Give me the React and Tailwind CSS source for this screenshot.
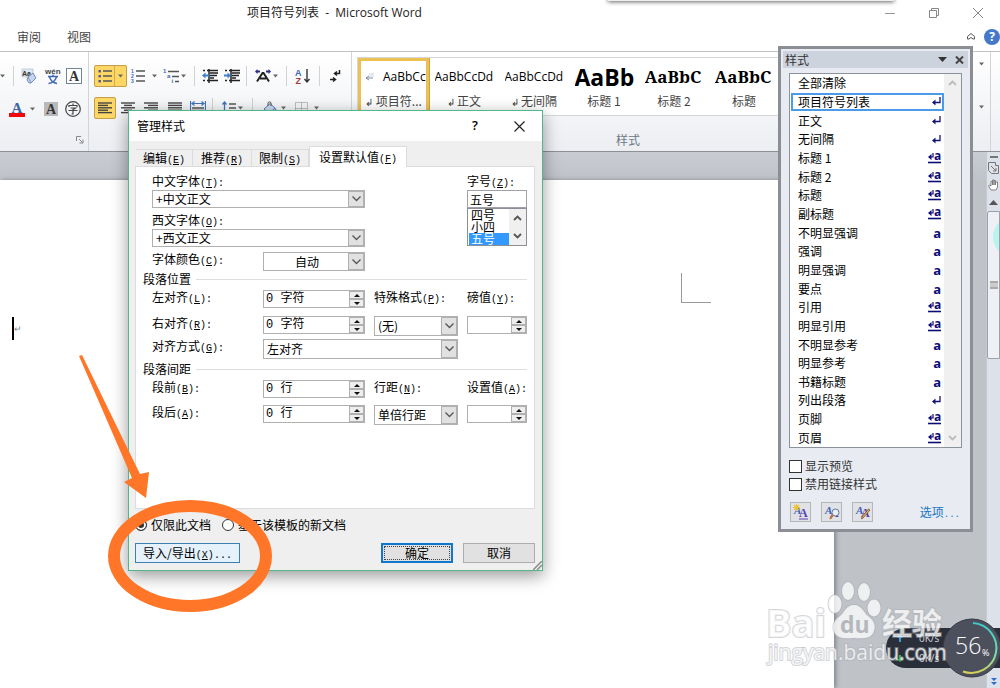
import React, { useState } from 'react';
import clsx from 'clsx';

const styleItems = [
  { name: '全部清除', type: 'none' },
  { name: '项目符号列表', type: 'para' },
  { name: '正文', type: 'para' },
  { name: '无间隔', type: 'para' },
  { name: '标题 1', type: 'linked' },
  { name: '标题 2', type: 'linked' },
  { name: '标题', type: 'linked' },
  { name: '副标题', type: 'linked' },
  { name: '不明显强调', type: 'char' },
  { name: '强调', type: 'char' },
  { name: '明显强调', type: 'char' },
  { name: '要点', type: 'char' },
  { name: '引用', type: 'linked' },
  { name: '明显引用', type: 'linked' },
  { name: '不明显参考', type: 'char' },
  { name: '明显参考', type: 'char' },
  { name: '书籍标题', type: 'char' },
  { name: '列出段落', type: 'para' },
  { name: '页脚', type: 'linked' },
  { name: '页眉', type: 'linked' },
];

const galleryItems = [
  { label: '正文', preview: 'AaBbCcDd', mark: true, look: "font-['Open_Sans'] text-xs" },
  { label: '无间隔', preview: 'AaBbCcDd', mark: true, look: "font-['Open_Sans'] text-xs" },
  { label: '标题 1', preview: 'AaBb', look: "font-['Open_Sans'] text-[23px] font-bold" },
  { label: '标题 2', preview: 'AaBbC', look: "font-['Noto_Serif','DejaVu_Serif',serif] text-[17px] font-bold" },
  { label: '标题', preview: 'AaBbC', look: "font-['Noto_Serif','DejaVu_Serif',serif] text-[17px] font-bold" },
];

/* ---------- ribbon icons ---------- */

const Lines = ({ rows, x = 0, color = '#444' }) => (
  <g stroke={color} strokeWidth="1.4">
    {rows.map(([start, end], i) => (
      <path key={i} d={`M${x + start} ${2 + i * 2.4}H${x + end}`} />
    ))}
  </g>
);

const Arrow = ({ className }) => (
  <svg className={clsx('h-1 w-[5px] shrink-0', className)} viewBox="0 0 5 4">
    <path d="M0 0.5h5L2.5 3.5z" fill="#666" />
  </svg>
);

const Sep = ({ className }) => <span className={clsx('h-5 w-px shrink-0 bg-[#cfd2d6]', className)} />;

const RibbonButton = ({ label, className, active, children }) => (
  <button
    type="button"
    aria-label={label}
    className={clsx(
      'flex h-[22px] shrink-0 items-center justify-center',
      active && 'rounded-xs border border-[#c79d45] bg-[#fdd766]',
      className
    )}
  >
    {children}
  </button>
);

const ClearFormatIcon = () => (
  <svg className="h-4 w-4" viewBox="0 0 16 16">
    <rect x="1" y="1" width="11" height="8" fill="#dfe7f2" stroke="#a9b7cc" strokeWidth="0.6" />
    <text x="1" y="8" fontSize="7" fontWeight="bold" fontFamily="Liberation Sans" fill="#333">Aa</text>
    <path d="M7 9l5-4 3 5-5 5H8l-2-3z" fill="#c6d5ee" stroke="#6d86b3" strokeWidth="0.9" />
    <path d="M7 9l3 6" stroke="#6d86b3" strokeWidth="0.8" />
  </svg>
);

const PinyinIcon = () => (
  <svg className="h-[18px] w-[18px] overflow-visible" viewBox="0 0 18 18">
    <text x="1" y="7" fontSize="8" fontWeight="bold" fontFamily="Liberation Sans" fill="#444">wén</text>
    <path d="M4 9.5h10M9 7.5v2M5.5 10c1 3 4 6 7.500 6.500M12.500 10c-1 3-4 6-8 6.500" stroke="#3e67b5" strokeWidth="1.4" fill="none" />
  </svg>
);

const BoxedAIcon = () => (
  <svg className="h-4 w-4" viewBox="0 0 16 16">
    <rect x="0.5" y="0.5" width="15" height="15" fill="#fff" stroke="#6f8796" />
    <text x="8" y="13" textAnchor="middle" fontSize="14" fontWeight="bold" fontFamily="Liberation Serif" fill="#333">A</text>
  </svg>
);

const FontColorIcon = () => (
  <svg className="h-[18px] w-4" viewBox="0 0 16 18">
    <text x="8" y="12.500" textAnchor="middle" fontSize="15" fontWeight="bold" fontFamily="Liberation Serif" fill="#3c63a8">A</text>
    <rect x="0" y="13" width="16" height="4" fill="#f00808" />
  </svg>
);

const ShadedAIcon = () => (
  <svg className="h-[14px] w-[14px]" viewBox="0 0 14 14">
    <rect width="14" height="14" fill="#b9b9b9" />
    <text x="7" y="12" textAnchor="middle" fontSize="14" fontWeight="bold" fontFamily="Liberation Serif" fill="#333">A</text>
  </svg>
);

const CircledIcon = () => (
  <svg className="h-4 w-4" viewBox="0 0 16 16">
    <circle cx="8" cy="8" r="7.300" fill="none" stroke="#444" strokeWidth="1.200" />
    <path d="M8 2.500v1.500M4 6V4.500h8V6M5.500 7h5L8 8.500V13H6.500M3.500 9.500h9" fill="none" stroke="#444" strokeWidth="1.200" />
  </svg>
);

const BulletsIcon = ({ numbers }) => (
  <svg className="h-[14px] w-[14px] overflow-visible" viewBox="0 0 14 14">
    {[2, 7, 12].map((y, i) => (
      <g key={y}>
        {numbers ? (
          <text x="0" y={y + 2} fontSize="5" fontWeight="bold" fontFamily="Liberation Sans" fill="#3e67b5">{i + 1}</text>
        ) : (
          <rect x="0.500" y={y - 1} width="2.400" height="2.400" fill="#4a5b86" />
        )}
        <path d={`M5 ${y}h9`} stroke="#555" strokeWidth="1.500" />
      </g>
    ))}
  </svg>
);

const MultilevelIcon = () => (
  <svg className="h-4 w-4 overflow-visible" viewBox="0 0 16 16">
    <g fontSize="6" fontWeight="bold" fontFamily="Liberation Sans" fill="#3e67b5">
      <text x="0" y="5">1</text>
      <text x="4" y="10">a</text>
      <text x="8.500" y="15">i</text>
    </g>
    <path d="M5 3.500h11M9 8.500h7M12 13.500h4" stroke="#555" strokeWidth="1.400" />
  </svg>
);

const IndentIcon = ({ out }) => (
  <svg className="h-[14px] w-4" viewBox="0 0 16 14">
    <path d="M1 1.500h2M5 1.500h11M8 4h8M8 6.500h7M8 9h4M5 11.500h11M1 11.500h2M7 0v14" stroke="#222" strokeWidth="1.500" />
    <path d={out ? 'M0 6.500l3.500-3v2H7v2H3.500v2z' : 'M7 6.500l-3.500-3v2H0v2h3.500v2z'} fill="#3f7fcb" />
  </svg>
);

const AsianLayoutIcon = () => (
  <svg className="h-[14px] w-4" viewBox="0 0 16 14">
    <path d="M2 12.500L7.500 4h1L14 12.500M5 9.500h6" fill="none" stroke="#222" strokeWidth="2" />
    <path d="M0 2.500L2.500 0v1.500H5v2H2.500V5zM16 2.500L13.500 0v1.500H11v2h2.500V5z" fill="#2c2d86" />
  </svg>
);

const SortIcon = () => (
  <svg className="h-4 w-4 overflow-visible" viewBox="0 0 16 16">
    <text x="0" y="7.500" fontSize="9" fontWeight="bold" fontFamily="Liberation Sans" fill="#3e67b5">A</text>
    <text x="0.500" y="15.500" fontSize="9" fontWeight="bold" fontFamily="Liberation Sans" fill="#a53a3a">Z</text>
    <path d="M12 1v13M9.500 11l2.500 3 2.500-3" fill="none" stroke="#333" strokeWidth="1.400" />
  </svg>
);

const MarksIcon = () => (
  <svg className="h-[14px] w-[11px]" viewBox="0 0 11 14">
    <path d="M9.500 1v3.500H5M7 2.500L4.500 4.500 7 6.500M0 10.500h5M3 8.500l2.500 2L3 12.500" fill="none" stroke="#222" strokeWidth="1.500" />
  </svg>
);

const AlignIcon = ({ rows }) => (
  <svg className="h-[14px] w-[14px]" viewBox="0 0 14 14">
    <Lines rows={rows} />
  </svg>
);

const DistributeIcon = () => (
  <svg className="h-4 w-4" viewBox="0 0 16 16">
    <path d="M0.500 1v14M15.500 1v14M2 3.500h12M4.500 1.500L2 3.500l2.500 2M11.500 1.500l2.500 2-2.500 2" fill="none" stroke="#3f73bd" strokeWidth="1.200" />
    <path d="M2 8h12M2 10.500h12M2 13h12" stroke="#555" strokeWidth="1.400" />
  </svg>
);

const SpacingIcon = () => (
  <svg className="h-[14px] w-[14px]" viewBox="0 0 14 14">
    <path d="M2.500 1v12M0.500 3.500l2-2.500 2 2.500M0.500 10.500l2 2.500 2-2.500" fill="none" stroke="#3f73bd" strokeWidth="1.300" />
    <path d="M7 3h7M7 7h7M7 11h7" stroke="#555" strokeWidth="1.500" />
  </svg>
);

const BucketIcon = () => (
  <svg className="h-[14px] w-[14px]" viewBox="0 0 14 14">
    <path d="M1 8l6-5.500L12 7l-6 5.500z" fill="#c9d8ef" stroke="#5b7fb8" />
    <path d="M5 5V2c0-1.500 3-1.500 3 0v3" fill="none" stroke="#555" />
    <path d="M12 7c2 1 2 4 1 5-1.500-1-1.500-3-1-5z" fill="#3f73bd" />
  </svg>
);

const BordersIcon = () => (
  <svg className="h-[13px] w-[13px]" viewBox="0 0 13 13">
    <path d="M0.500 0.500h12v12h-12zM6.500 0.500v12M0.500 6.500h12" fill="none" stroke="#888" strokeDasharray="1 1" />
    <path d="M0 12.500h13" stroke="#555" />
  </svg>
);

/* ---------- dialog parts ---------- */

// caption followed by its access key, e.g. 编辑(E)
const Caption = ({ text, k, end = '' }) => (
  <>
    {text}
    <span className="font-['Liberation_Mono',monospace] text-[10px] leading-none">
      (<u>{k}</u>){end}
    </span>
  </>
);

const FieldLabel = ({ id, text, k, className }) => (
  <label htmlFor={id} className={clsx('block whitespace-nowrap', className || 'h-[14px] leading-[14px]')}>
    <Caption text={text} k={k} end=":" />
  </label>
);

const SelectBox = ({ id, value, className, center }) => (
  <span className={clsx('relative block border border-[#b0b0b0] bg-white', className)}>
    <select
      id={id}
      className={clsx('block h-full w-full appearance-none bg-transparent pr-[17px] pl-[3px] leading-4 outline-none', center && 'text-center')}
    >
      <option>{value}</option>
    </select>
    <span className="pointer-events-none absolute inset-y-0 right-0 flex w-4 items-center justify-center border border-[#b0b0b0] bg-[#e1e1e1]">
      <svg className="h-[6px] w-[9px]" viewBox="0 0 9 6">
        <path d="M0.500 0.500l4 4 4-4" fill="none" stroke="#555" strokeWidth="1.300" />
      </svg>
    </span>
  </span>
);

const SpinBox = ({ id, value }) => (
  <span className="flex h-[18px] border border-[#b0b0b0] bg-white">
    <input
      id={id}
      defaultValue={value}
      className="w-full min-w-0 flex-1 pl-[2px] font-['Liberation_Mono','Noto_Sans_CJK_SC',monospace] leading-4 outline-none"
    />
    <span className="flex w-[15px] shrink-0 flex-col">
      {['M0 3h6L3 0z', 'M0 0h6L3 3z'].map((d, i) => (
        <button
          key={d}
          type="button"
          aria-label={i === 0 ? '增加' : '减少'}
          className="flex flex-1 items-center justify-center border border-[#b0b0b0] bg-[#eee]"
        >
          <svg className="h-[3px] w-[6px]" viewBox="0 0 6 3">
            <path d={d} fill="#111" />
          </svg>
        </button>
      ))}
    </span>
  </span>
);

const SectionTitle = ({ children }) => (
  <div className="-ml-[9px] flex h-4 items-center gap-[5px] leading-4">
    <h3>{children}</h3>
    <span className="h-px flex-1 bg-[#dedede]" />
  </div>
);

const Chevron = ({ up, color }) => (
  <svg className="h-[6px] w-[9px]" viewBox="0 0 9 6">
    <path d={up ? 'M1 5l3.500-3.500L8 5' : 'M1 1l3.500 3.500L8 1'} fill="none" stroke={color} strokeWidth="1.800" />
  </svg>
);

const rowGrid = 'grid grid-cols-[102px_102px_84px_60px] items-start gap-x-[9px]';

const ManageStylesDialog = () => {
  const [scope, setScope] = useState('doc');
  const tabs = [
    { text: '编辑', k: 'E', width: 'w-[57px]' },
    { text: '推荐', k: 'R', width: 'w-[59px]' },
    { text: '限制', k: 'S', width: 'w-[57px]' },
  ];

  return (
    <section
      role="dialog"
      aria-label="管理样式"
      className="absolute top-[110px] left-32 flex w-[415px] flex-col border border-[#52b788] bg-[#efefef] text-xs text-black shadow-[0_5px_16px_rgba(0,0,0,0.4)]"
    >
      <header className="flex h-[30px] items-center bg-white pl-2">
        <h2 className="flex-1">管理样式</h2>
        <button type="button" aria-label="帮助" className="mr-9 font-['Open_Sans'] text-[13px] font-semibold">?</button>
        <button type="button" aria-label="关闭" className="mr-[17px]">
          <svg className="h-[11px] w-[11px]" viewBox="0 0 11 11">
            <path d="M0.500 0.500l10 10M10.500 0.500l-10 10" stroke="#222" strokeWidth="1.200" />
          </svg>
        </button>
      </header>

      <div className="flex flex-col pt-[5px] pr-[7px] pb-[7px] pl-[6px]">
        <div role="tablist" className="relative z-10 -mb-px flex h-[21px] items-end pl-px">
          {tabs.map(tab => (
            <button
              key={tab.k}
              type="button"
              role="tab"
              className={clsx('mb-px h-[17px] border-t border-r border-[#dcdcdc] leading-4', tab.width)}
            >
              <Caption text={tab.text} k={tab.k} />
            </button>
          ))}
          <button type="button" role="tab" aria-selected="true" className="h-[21px] w-[98px] border border-b-0 border-[#dcdcdc] bg-white leading-5">
            <Caption text="设置默认值" k="F" />
          </button>
        </div>

        <div role="tabpanel" className="h-[343px] border border-[#dcdcdc] bg-white pt-[6px] pr-[7px] pl-4">
          <div className="flex justify-between">
            <div className="w-[213px]">
              <FieldLabel id="cn-font" text="中文字体" k="T" className="h-[17px] leading-4" />
              <SelectBox id="cn-font" value="+中文正文" className="h-[18px]" />
              <FieldLabel id="en-font" text="西文字体" k="O" className="mt-1 h-[17px] leading-4" />
              <SelectBox id="en-font" value="+西文正文" className="h-[18px]" />
              <div className="mt-[5px] flex items-start justify-between">
                <FieldLabel id="font-color" text="字体颜色" k="C" />
                <SelectBox id="font-color" value="自动" className="h-[19px] w-[102px]" center />
              </div>
            </div>
            <div className="w-[60px]">
              <FieldLabel id="font-size" text="字号" k="Z" className="h-[17px] leading-4" />
              <input id="font-size" defaultValue="五号" className="block h-[18px] w-full border border-[#a0a0a8] bg-white pl-[2px] leading-4 outline-none" />
              <div className="flex h-[38px] border border-[#8c8f98] bg-white">
                <ul role="listbox" aria-label="字号" className="flex-1 pl-px leading-3">
                  <li role="option" className="pl-[2px]">四号</li>
                  <li role="option" className="pl-[2px]">小四</li>
                  <li role="option" aria-selected="true" className="bg-[#3399ff] pl-[2px] text-white">五号</li>
                </ul>
                <div className="flex w-[17px] flex-col items-center justify-between bg-[#f0f0f0] py-[6px]">
                  <Chevron up color="#555" />
                  <Chevron color="#555" />
                </div>
              </div>
            </div>
          </div>

          <SectionTitle>段落位置</SectionTitle>
          <div className={clsx('mt-[3px]', rowGrid)}>
            <FieldLabel id="left" text="左对齐" k="L" />
            <SpinBox id="left" value="0 字符" />
            <FieldLabel id="special" text="特殊格式" k="P" />
            <FieldLabel id="points" text="磅值" k="Y" />
          </div>
          <div className={clsx('mt-2', rowGrid)}>
            <FieldLabel id="right" text="右对齐" k="R" />
            <SpinBox id="right" value="0 字符" />
            <SelectBox id="special" value="(无)" className="h-5" />
            <SpinBox id="points" value="" />
          </div>
          <div className={clsx('mt-[3px]', rowGrid)}>
            <FieldLabel id="align" text="对齐方式" k="G" />
            <SelectBox id="align" value="左对齐" className="col-span-2 h-5" />
          </div>

          <div className="mt-[2px]">
            <SectionTitle>段落间距</SectionTitle>
          </div>
          <div className={clsx('mt-[3px]', rowGrid)}>
            <FieldLabel id="before" text="段前" k="B" />
            <SpinBox id="before" value="0 行" />
            <FieldLabel id="line" text="行距" k="N" />
            <FieldLabel id="at" text="设置值" k="A" />
          </div>
          <div className={clsx('mt-[7px]', rowGrid)}>
            <FieldLabel id="after" text="段后" k="A" />
            <SpinBox id="after" value="0 行" />
            <SelectBox id="line" value="单倍行距" className="h-5" />
            <SpinBox id="at" value="" />
          </div>
        </div>

        <div className="mt-2 flex h-4 items-center gap-[11px] leading-4">
          {[['doc', '仅限此文档'], ['template', '基于该模板的新文档']].map(([value, text]) => (
            <label key={value} className="flex items-center gap-1">
              <input
                type="radio"
                name="scope"
                checked={scope === value}
                onChange={() => setScope(value)}
                className="h-3 w-3 appearance-none rounded-full border border-[#333] bg-white checked:bg-[#333] checked:shadow-[inset_0_0_0_2px_#fff]"
              />
              {text}
            </label>
          ))}
        </div>

        <div className="mt-[10px] flex h-5 leading-[18px]">
          <button type="button" className="w-[105px] border border-[#3c7fb1] bg-[#e5f1fb]">
            <Caption text="导入/导出" k="X" end="..." />
          </button>
          <button type="button" className="ml-auto w-[72px] border-2 border-[#1177cc] bg-[#e1e1e1] p-px">
            <span className="block h-full border border-dotted border-[#444] leading-3">确定</span>
          </button>
          <button type="button" className="ml-[10px] w-[72px] border border-[#adadad] bg-[#e1e1e1]">取消</button>
        </div>
      </div>
      <svg className="absolute right-0 bottom-0 h-[9px] w-[9px]" viewBox="0 0 9 9">
        <path d="M0 9L9 0M4 9l5-5" stroke="#8b8b8b" strokeWidth="1.500" />
      </svg>
    </section>
  );
};

/* ---------- styles pane ---------- */

const TypeMark = ({ type }) => {
  if (type === 'none') return null;
  if (type === 'para') {
    return (
      <svg className="h-[9px] w-[9px]" viewBox="0 0 9 9">
        <path d="M8 0v5.500H1.500" fill="none" stroke="#14147a" strokeWidth="1.300" />
        <path d="M0 5.500L3.500 2.500v6z" fill="#14147a" />
      </svg>
    );
  }
  if (type === 'char') {
    return <span className="font-['Open_Sans'] text-[13px] font-bold text-[#0c0c78]">a</span>;
  }
  return (
    <svg className="h-3 w-[13px] overflow-visible" viewBox="0 0 13 12">
      <path d="M5 1v4H2" fill="none" stroke="#0c0c78" strokeWidth="1.200" />
      <path d="M0 5L3.500 2v6z" fill="#0c0c78" />
      <text x="6" y="8" fontSize="12" fontWeight="bold" fontFamily="Open Sans" fill="#0c0c78">a</text>
      <path d="M0 10.500h13" stroke="#0c0c78" strokeWidth="1.600" />
    </svg>
  );
};

const PaneIcon = ({ kind }) => (
  <svg className="h-4 w-4" viewBox="0 0 16 16">
    <text x="1" y="10" fontSize="11" fontStyle="italic" fontWeight="bold" fontFamily="Liberation Serif" fill="#3e63b8">A</text>
    <text x="6" y="13" fontSize="12" fontWeight="bold" fontFamily="Liberation Serif" fill="#5a3fb0">A</text>
    {kind === 'new' && (
      <>
        <path d="M3.500 0v7M0 3.500h7M1 1l5 5M6 1L1 6" stroke="#eebf2c" strokeWidth="1.100" />
        <path d="M6 15h9" stroke="#5a3fb0" />
      </>
    )}
    {kind === 'inspect' && (
      <>
        <circle cx="11.500" cy="8.500" r="3.500" fill="#e6effa" stroke="#697a90" />
        <path d="M9 11l-3 4" stroke="#b77338" strokeWidth="2" />
      </>
    )}
    {kind === 'manage' && <path d="M15 6l-7 8-1.500.8.500-2L13.500 5z" fill="#e7b565" stroke="#704a28" strokeWidth="0.800" />}
  </svg>
);

const StylesPane = () => {
  const [selected, setSelected] = useState('项目符号列表');
  return (
    <aside className="absolute top-[46px] right-[27px] flex w-[195px] flex-col border-[3px] border-[#8b8f94] bg-[#e8ecf2] px-[2px] pt-[2px] pb-[7px] text-xs text-black">
      <header className="flex h-[17px] items-center bg-[#cdd3dd] pr-1 pl-[2px] text-[#333]">
        <h2 className="flex-1 leading-4">样式</h2>
        <button type="button" aria-label="任务窗格选项">
          <svg className="h-[5px] w-[9px]" viewBox="0 0 9 5"><path d="M0 0h9L4.500 5z" fill="#333" /></svg>
        </button>
        <button type="button" aria-label="关闭" className="ml-2">
          <svg className="h-2 w-[9px]" viewBox="0 0 9 8"><path d="M1 0.500l7 7M8 0.500l-7 7" stroke="#444" strokeWidth="2" /></svg>
        </button>
      </header>

      <div className="mx-[6px] mt-[5px] flex h-[375px] border border-[#8c929c] bg-white">
        <ul className="flex flex-1 flex-col pl-px">
          {styleItems.map(item => (
            <li key={item.name} className="flex min-h-0 flex-1">
              <button
                type="button"
                onClick={() => setSelected(item.name)}
                className={clsx(
                  'flex w-full items-center justify-between border-2 pr-px pl-[5px] leading-3',
                  selected === item.name ? 'border-[#4a9be8]' : 'border-transparent'
                )}
              >
                <span>{item.name}</span>
                <TypeMark type={item.type} />
              </button>
            </li>
          ))}
        </ul>
        <div className="flex w-[17px] flex-col items-center justify-between bg-[#f0f0f0] py-[6px]">
          <Chevron up color="#bbb" />
          <Chevron color="#bbb" />
        </div>
      </div>

      <div className="mt-[10px] ml-[6px] flex flex-col gap-[2px] leading-4 text-[#333]">
        {['显示预览', '禁用链接样式'].map(text => (
          <label key={text} className="flex items-center gap-[3px]">
            <input type="checkbox" className="h-[13px] w-[13px] appearance-none border border-[#333] bg-white" />
            {text}
          </label>
        ))}
      </div>

      <div className="mt-[10px] ml-[7px] flex items-center gap-[10px] pr-2">
        {[['new', '新建样式'], ['inspect', '样式检查器'], ['manage', '管理样式']].map(([kind, label]) => (
          <button key={kind} type="button" aria-label={label} className="flex h-5 w-[21px] items-center justify-center border border-[#b4b6ba] bg-[#e1e2e6]">
            <PaneIcon kind={kind} />
          </button>
        ))}
        <a href="#options" className="ml-auto text-[#1874c4]">
          选项<span className="font-['Liberation_Mono',monospace] text-[9px]">...</span>
        </a>
      </div>
    </aside>
  );
};

/* ---------- ribbon ---------- */

const Ribbon = () => (
  <div className="flex h-[101px] shrink-0 border-t border-b border-t-[#c3c3c5] border-b-[#8b9097] bg-linear-to-b from-white to-[#eceef2]">
    <div className="flex w-[89px] shrink-0 flex-col border-r border-[#d0d3d8] pt-[13px]">
      <div className="flex h-[22px] items-center">
        <Arrow />
        <Sep className="ml-2" />
        <RibbonButton label="清除格式" className="ml-[7px]"><ClearFormatIcon /></RibbonButton>
        <RibbonButton label="拼音指南" className="ml-[7px]"><PinyinIcon /></RibbonButton>
        <RibbonButton label="字符边框" className="ml-1"><BoxedAIcon /></RibbonButton>
      </div>
      <div className="mt-[11px] flex h-[22px] items-center">
        <RibbonButton label="字体颜色" className="ml-[9px]"><FontColorIcon /></RibbonButton>
        <Arrow className="ml-[5px]" />
        <RibbonButton label="字符底纹" className="ml-[9px]"><ShadedAIcon /></RibbonButton>
        <RibbonButton label="带圈字符" className="ml-[7px]"><CircledIcon /></RibbonButton>
      </div>
      <svg className="mt-[16px] ml-[76px] h-2 w-2" viewBox="0 0 8 8">
        <path d="M0.500 5V0.500H5M3 3l4 4M7 3.500V7H3.500" fill="none" stroke="#888" />
      </svg>
    </div>

    <div className="flex w-[263px] shrink-0 flex-col border-r border-[#d0d3d8] pt-[13px] pl-[5px]">
      <div className="flex h-[22px] items-center">
        <RibbonButton label="项目符号" active className="w-[33px]">
          <BulletsIcon />
          <span className="ml-[2px] flex h-full items-center border-l border-[#d8ab4b] pl-[3px]"><Arrow /></span>
        </RibbonButton>
        <RibbonButton label="编号" className="ml-1"><BulletsIcon numbers /></RibbonButton>
        <Arrow className="ml-[7px]" />
        <RibbonButton label="多级列表" className="ml-[6px]"><MultilevelIcon /></RibbonButton>
        <Arrow className="ml-[2px]" />
        <Sep className="ml-2" />
        <RibbonButton label="减少缩进量" className="ml-[7px]"><IndentIcon out /></RibbonButton>
        <RibbonButton label="增加缩进量" className="ml-[6px]"><IndentIcon /></RibbonButton>
        <Sep className="ml-[6px]" />
        <RibbonButton label="中文版式" className="ml-2"><AsianLayoutIcon /></RibbonButton>
        <Arrow className="ml-[2px]" />
        <Sep className="ml-2" />
        <RibbonButton label="排序" className="ml-2"><SortIcon /></RibbonButton>
        <Sep className="ml-2" />
        <RibbonButton label="显示编辑标记" className="ml-[10px]"><MarksIcon /></RibbonButton>
      </div>
      <div className="mt-[10px] flex h-[22px] items-center">
        <RibbonButton label="左对齐" active className="w-[22px]">
          <AlignIcon rows={[[0, 14], [0, 10], [0, 14], [0, 10], [0, 14]]} />
        </RibbonButton>
        <RibbonButton label="居中" className="ml-[5px]">
          <AlignIcon rows={[[0, 14], [3, 11], [0, 14], [3, 11], [0, 14]]} />
        </RibbonButton>
        <RibbonButton label="右对齐" className="ml-[9px]">
          <AlignIcon rows={[[0, 14], [4, 14], [0, 14], [4, 14], [0, 14]]} />
        </RibbonButton>
        <RibbonButton label="两端对齐" className="ml-[10px]">
          <AlignIcon rows={[[0, 14], [0, 14], [0, 14], [0, 14], [0, 14]]} />
        </RibbonButton>
        <RibbonButton label="分散对齐" className="ml-2"><DistributeIcon /></RibbonButton>
        <Sep className="ml-[6px]" />
        <RibbonButton label="行距" className="ml-[9px]"><SpacingIcon /></RibbonButton>
        <Arrow className="ml-[2px]" />
        <Sep className="ml-[9px]" />
        <RibbonButton label="底纹" className="ml-[10px]"><BucketIcon /></RibbonButton>
        <Arrow className="ml-1" />
        <RibbonButton label="边框" className="ml-[9px]"><BordersIcon /></RibbonButton>
        <Arrow className="ml-[6px]" />
      </div>
    </div>

    <div className="flex min-w-0 flex-1 flex-col pt-[5px] pl-[5px]">
      <div className="flex h-[59px] overflow-hidden border border-[#d5d7da] bg-white text-[#444]">
        <button type="button" className="flex w-[71px] shrink-0 flex-col items-center border-[3px] border-[#ecc153] outline outline-[#cda349]">
          <span className="flex h-8 w-full items-center overflow-hidden pl-1 font-['Open_Sans'] text-xs text-black">
            <svg className="mr-[9px] h-2 w-[9px] shrink-0" viewBox="0 0 9 8">
              <path d="M1 5h7M4 3L1 5l3 2" fill="none" stroke="#7d8ca0" />
              <path d="M4 0h5v4H4z" fill="#e6eaf0" />
            </svg>
            AaBbCc
          </span>
          <span className="text-xs leading-4 whitespace-nowrap"><span className="text-[10px]">↲</span> 项目符...</span>
        </button>
        {galleryItems.map(item => (
          <button key={item.label} type="button" className="flex w-[70px] shrink-0 flex-col items-center pt-[3px]">
            <span className={clsx('flex h-8 w-[59px] items-center overflow-hidden text-black', item.look)}>{item.preview}</span>
            <span className="text-xs leading-4">{item.mark && <span className="text-[10px]">↲ </span>}{item.label}</span>
          </button>
        ))}
      </div>
      <div className="mt-4 pl-[259px] text-xs leading-4 text-[#6d7785]">样式</div>
    </div>

    <div className="flex w-[27px] shrink-0">
      <div className="flex w-[18px] flex-col items-center gap-[39px] border-r border-[#d0d3d8] pt-[10px]">
        <Arrow />
        <Arrow />
      </div>
    </div>
  </div>
);

/* ---------- overlays ---------- */

const SpeedRow = ({ path, color }) => (
  <div className="flex items-center gap-4 leading-4">
    <svg className="h-[7px] w-[6px]" viewBox="0 0 6 7"><path d={path} fill={color} /></svg>
    0K/s
  </div>
);

const SpeedMeter = () => (
  <div className="absolute right-0 bottom-[10px] flex h-[60px] w-[114px] items-center font-['Open_Sans']">
    <div className="flex h-10 w-full flex-col justify-around rounded-l-full bg-[#2b2f3a] pl-[11px] text-[10px] text-[#d5d8de]">
      <SpeedRow path="M3 0l3 3H4v4H2V3H0z" color="#3e9be0" />
      <SpeedRow path="M3 7l3-3H4V0H2v4H0z" color="#25bb45" />
    </div>
    <svg className="absolute -right-[2px] h-[60px] w-[60px]" viewBox="0 0 60 60">
      <defs>
        <linearGradient id="meter" x1="0" y1="0" x2="0" y2="1">
          <stop offset="0" stopColor="#3fc8c5" />
          <stop offset="0.6" stopColor="#6edfb0" />
          <stop offset="1" stopColor="#d8cf5a" />
        </linearGradient>
      </defs>
      <circle cx="30" cy="30" r="29" fill="#4c4f5c" stroke="#363945" />
      <path d="M31 5a25 25 0 1 1-10 48.500" fill="none" stroke="url(#meter)" strokeWidth="2" />
      <text x="13" y="36" fontSize="23" fontWeight="300" fontFamily="Open Sans" fill="#fff">56</text>
      <text x="40" y="38" fontSize="9" fontFamily="Open Sans" fill="#fff">%</text>
    </svg>
  </div>
);

const Watermark = () => (
  <svg className="pointer-events-none absolute right-[46px] bottom-[10px] h-[100px] w-[192px]" viewBox="0 0 192 100">
    <g fill="#fff" fillOpacity="0.75" stroke="#a9adb3" strokeOpacity="0.5" strokeWidth="2" paintOrder="stroke">
      <ellipse cx="86" cy="13" rx="6" ry="9" />
      <ellipse cx="102" cy="14" rx="6" ry="9" />
      <ellipse cx="73" cy="26" rx="6.500" ry="9" />
      <ellipse cx="112" cy="30" rx="6.500" ry="8.500" />
      <path d="M92 27c-8 0-9 7-14 11-6 5-8 9-6 15 2 7 9 8 20 7 11 1 18 0 20-7 2-6 0-10-6-15-5-4-6-11-14-11z" />
      <text x="4" y="59" fontSize="38" fontWeight="bold" fontFamily="Open Sans">Bai</text>
      <text x="120" y="56" fontSize="30" fontWeight="bold" fontFamily="Noto Sans CJK SC">经验</text>
      <text x="6" y="82" fontSize="21" fontFamily="Open Sans">jingyan.baidu.com</text>
    </g>
    <text x="78" y="55" fontSize="23" fontWeight="bold" fontFamily="Open Sans" fill="#b4b7bb">du</text>
  </svg>
);

// hand-drawn arrow and ring around the import/export button
const Annotation = () => (
  <svg className="pointer-events-none absolute top-[350px] left-[70px] h-[270px] w-[210px]" viewBox="0 0 210 270">
    <path d="M9 6l3-1 58 119 9-2-3 26-22-16 8-4z" fill="#ff7628" />
    <ellipse cx="120" cy="206" rx="76" ry="50" fill="none" stroke="#ff7628" strokeWidth="12" />
  </svg>
);

const VerticalScrollbar = () => (
  <div className="flex w-[14px] shrink-0 flex-col items-center border-l border-[#c5cad2] bg-[#dce1ea] text-[#777]">
    <span className="mt-1 h-[2px] w-2 bg-[#777]" />
    <svg className="mt-1 h-3 w-[11px] shrink-0" viewBox="0 0 11 12">
      <path d="M0.500 0.500h7v3h3v8h-7l-3-3zM3 4l5 5M8 6v3H5" fill="none" stroke="#777" />
    </svg>
    <svg className="mt-[5px] h-3 w-[11px] shrink-0" viewBox="0 0 11 12">
      <path d="M3 11L0.500 7l1-1L3 7V2.500h1.500V6 1h1.500v5-4.500h1.500V6 3H9.500v5L8 11z" fill="#fff" stroke="#777" strokeWidth="0.900" />
    </svg>
    <svg className="mt-[9px] h-[5px] w-[9px] shrink-0" viewBox="0 0 9 5"><path d="M0 5h9L4.500 0z" fill="#555" /></svg>
    <div className="relative mt-[6px] flex h-[148px] w-full items-center justify-center overflow-hidden rounded-l-xs border border-[#9ba1ab] bg-[#eef0f4]">
      <span className="absolute top-1 left-[5px] h-[42px] w-[42px] rounded-full bg-[#b9f3ee]" />
      <span className="h-2 w-2 border-y-2 border-[#aaa] bg-[#ccc]" />
    </div>
    <svg className="mt-auto mb-[3px] h-[7px] w-[6px] shrink-0" viewBox="0 0 6 7">
      <path d="M0 0h6L3 3zM0 4h6L3 7z" fill="#2d6cd0" />
    </svg>
  </div>
);

const App = () => (
  <div className="relative flex h-screen flex-col overflow-hidden bg-white font-['Noto_Sans_CJK_SC',sans-serif]">
    <div className="absolute -top-2 right-[106px] h-[9px] w-[286px] bg-[#eee] shadow-[0_1px_4px_rgba(0,0,0,0.6)]" />

    <header className="flex h-[26px] shrink-0 items-center justify-end">
      <h1 className="mr-auto pl-[247px] font-['Open_Sans','Noto_Sans_CJK_SC',sans-serif] text-xs whitespace-pre text-[#222]">
        项目符号列表  -  Microsoft Word
      </h1>
      <div className="flex items-center gap-[34px] pr-[17px]">
        <button type="button" aria-label="最小化">
          <svg className="h-[10px] w-[10px]" viewBox="0 0 10 10"><path d="M0 5.500h10" stroke="#999" /></svg>
        </button>
        <button type="button" aria-label="还原">
          <svg className="h-[10px] w-[10px]" viewBox="0 0 10 10">
            <path d="M0.500 2.500h7v7h-7zM2.500 2.500v-2h7v7h-2" fill="none" stroke="#888" />
          </svg>
        </button>
        <button type="button" aria-label="关闭">
          <svg className="h-[10px] w-[10px]" viewBox="0 0 10 10"><path d="M0 0l10 10M10 0L0 10" stroke="#888" /></svg>
        </button>
      </div>
    </header>

    <nav className="flex h-[25px] shrink-0 items-center gap-[26px] pb-1 pl-[17px] text-xs text-[#444]">
      <button type="button">审阅</button>
      <button type="button">视图</button>
      <div className="ml-auto flex items-center gap-[9px]">
        <svg className="h-[7px] w-2" viewBox="0 0 8 7">
          <path d="M0.500 3.500L4 0.500l3.500 3V6H6L4 4.500 2 6H0.500z" fill="none" stroke="#555" />
        </svg>
        <button type="button" aria-label="帮助" className="h-4 w-4 rounded-full bg-[#4479c9] text-center font-['Open_Sans'] text-xs leading-4 font-bold text-white">?</button>
      </div>
    </nav>

    <Ribbon />

    <main className="flex min-h-0 flex-1">
      <div className="flex min-w-0 flex-1 flex-col bg-[#bfc2c7]">
        <div className="h-7 shrink-0 bg-linear-to-b from-[#c9cdd3] to-[#bfc3c9]" />
        <article className="relative mr-[152px] flex-1 bg-white shadow-[2px_0_4px_rgba(90,95,105,0.6)]">
          {/* text cursor and paragraph mark */}
          <div className="flex items-center pt-[137px] pl-3">
            <span className="h-[23px] w-[2px] bg-black" />
            <span className="text-[9px] text-[#888]">↵</span>
          </div>
          {/* page margin corner */}
          <span className="absolute top-[93px] right-[123px] h-[30px] w-[30px] border-b border-l border-[#999]" />
        </article>
      </div>
      <VerticalScrollbar />
    </main>

    <ManageStylesDialog />
    <StylesPane />
    <SpeedMeter />
    <Watermark />
    <Annotation />
  </div>
);

export default App;
